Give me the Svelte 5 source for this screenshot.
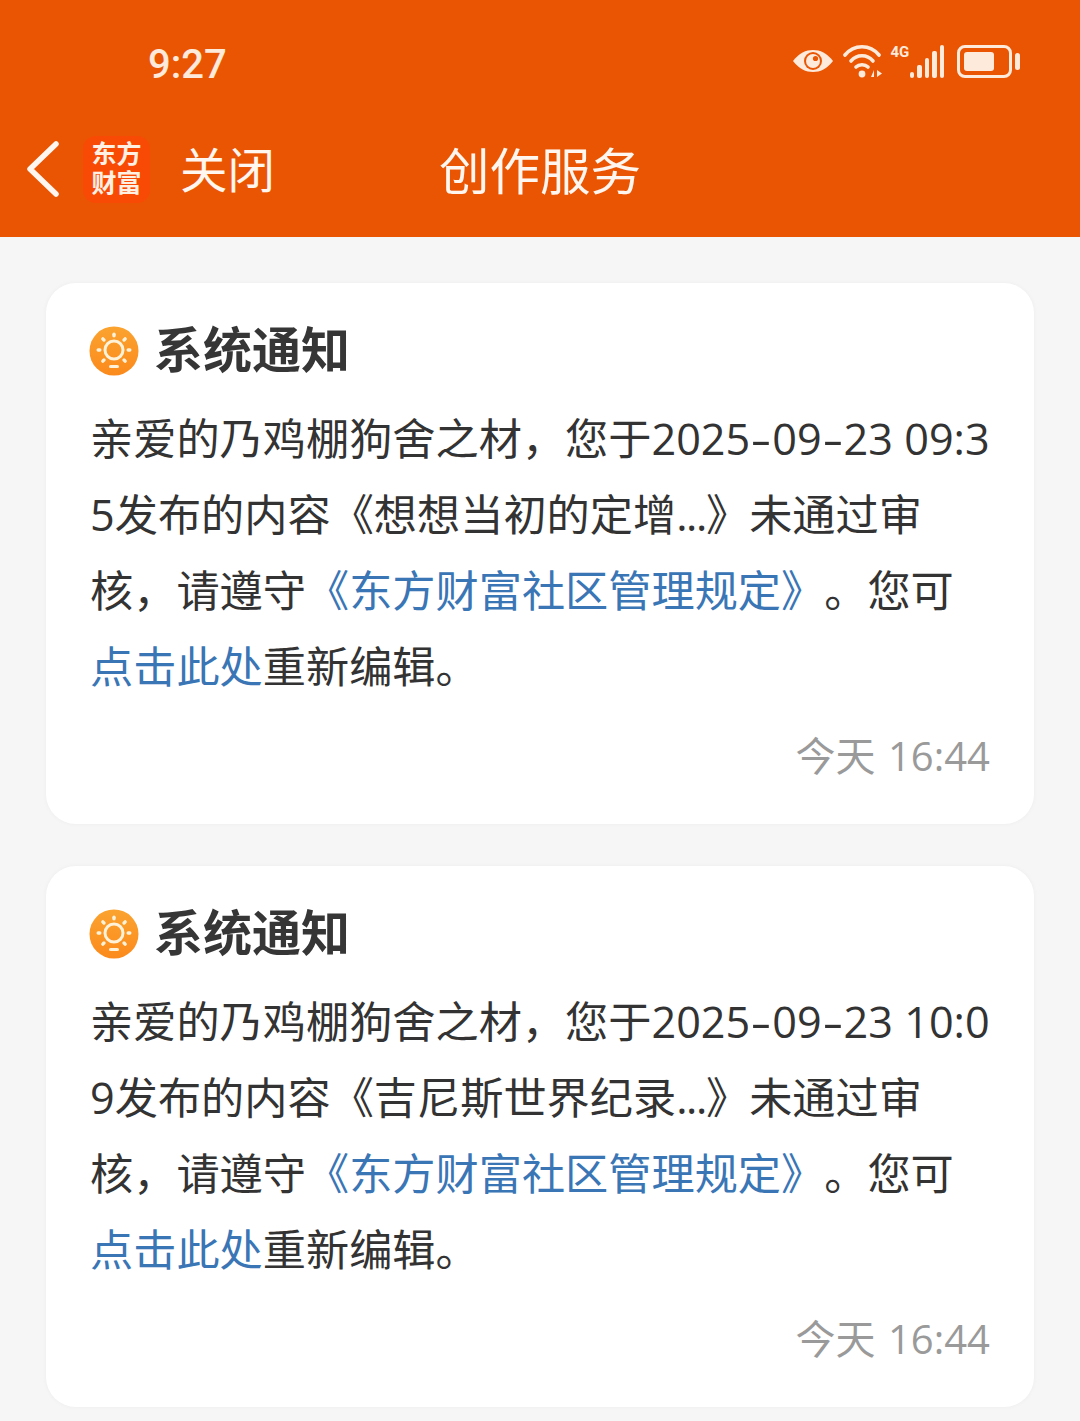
<script>
  const cards = [
    { time: '09:3', wrap: '5', book: '想想当初的定增' },
    { time: '10:0', wrap: '9', book: '吉尼斯世界纪录' }
  ];
  const sunRays = [0, 45, 90, 135, 225, 270, 315];
</script>

<div class="page">
  <header class="header">
    <div class="status">
      <span class="clock">9:27</span>
      <div class="status-icons">
        <svg class="eye" width="44" height="24" viewBox="0 0 42 24">
          <path d="M1 12C7 4 14 1 21 1s14 3 20 11c-6 8-13 11-20 11S7 20 1 12z" fill="#fdeadb"/>
          <circle cx="21" cy="12" r="9" fill="#ea5504"/>
          <circle cx="21" cy="12" r="7" fill="#fdeadb"/>
          <circle cx="23.5" cy="9.5" r="2.6" fill="#ea5504"/>
        </svg>
        <svg class="wifi" width="40" height="34" viewBox="0 0 40 34">
          <g fill="none" stroke="#fdeadb" stroke-width="3.6" stroke-linecap="round">
            <path d="M2 11C11 0 27 0 36 11"/>
            <path d="M8 17C14 10 24 10 30 17"/>
            <path d="M13 23C16 20 22 20 25 23"/>
          </g>
          <circle cx="19" cy="30" r="3.4" fill="#fdeadb"/>
          <path d="M28 33l3-7v7zM34 26l5 3.5-5 3.5z" fill="#fdeadb"/>
        </svg>
        <div class="cell">
          <span class="fourg">4G</span>
          <div class="bars">
            <i style="height: 6px"></i>
            <i style="height: 13px"></i>
            <i style="height: 20px"></i>
            <i style="height: 27px"></i>
            <i style="height: 33px"></i>
          </div>
        </div>
        <div class="battery">
          <div class="shell"><div class="level"></div></div>
          <div class="cap"></div>
        </div>
      </div>
    </div>
    <div class="nav">
      <svg class="back" width="36" height="58" viewBox="0 0 36 58">
        <path d="M31 4L5 29l26 25" fill="none" stroke="#fff6ef" stroke-width="5.5" stroke-linecap="round" stroke-linejoin="round"/>
      </svg>
      <div class="logo"><span>东方</span><span>财富</span></div>
      <span class="close">关闭</span>
      <h1 class="title">创作服务</h1>
    </div>
  </header>

  <main class="list">
    {#each cards as card}
      <article class="card">
        <div class="card-title">
          <svg class="sun" width="50" height="50" viewBox="0 0 50 50">
            <defs>
              <linearGradient id="sunfill" x1="0" y1="0" x2="0" y2="1">
                <stop offset="0" stop-color="#fba32f"/>
                <stop offset="1" stop-color="#fb8a1c"/>
              </linearGradient>
            </defs>
            <circle cx="25" cy="25" r="24.5" fill="url(#sunfill)"/>
            <circle cx="25" cy="24" r="9" fill="none" stroke="#fff2d8" stroke-width="3"/>
            {#each sunRays as a}
              <rect x="23.3" y="6.5" width="3.4" height="5" rx="1.7" fill="#fff2d8" transform="rotate({a} 25 24)"/>
            {/each}
            <rect x="20" y="39" width="10" height="3" rx="1.5" fill="#fff2d8"/>
          </svg>
          <h2>系统通知</h2>
        </div>
        <div class="body">
          <div class="line">亲爱的乃鸡棚狗舍之材，您于2025<span class="dash">-</span>09<span class="dash">-</span>23 {card.time}</div>
          <div class="line">{card.wrap}发布的内容《{card.book}<span class="dots">...</span>》未通过审</div>
          <div class="line">核，请遵守<span class="link">《东方财富社区管理规定》</span>。您可</div>
          <div class="line"><span class="link">点击此处</span>重新编辑。</div>
        </div>
        <div class="stamp">今天 16:44</div>
      </article>
    {/each}
  </main>
</div>

<style>
  :global(body) {
    margin: 0;
    background: #f6f6f6;
  }
  .page {
    height: 1421px;
    overflow: hidden;
    font-family: "Open Sans", "Noto Sans CJK SC", sans-serif;
    text-spacing-trim: space-all;
  }
  .header {
    background: #ea5504;
    height: 237px;
    box-sizing: border-box;
    display: flex;
    flex-direction: column;
  }
  .status {
    height: 125px;
    display: flex;
    justify-content: space-between;
    align-items: center;
    box-sizing: border-box;
    padding: 0 60px 0 148px;
  }
  .clock {
    font-size: 40px;
    font-weight: 500;
    color: #fdeadb;
    font-family: "Roboto", sans-serif;
    margin-top: 3px;
  }
  .status-icons {
    display: flex;
    align-items: center;
    margin-top: -3px;
  }
  .wifi {
    margin-left: 8px;
  }
  .cell {
    display: flex;
    align-items: flex-end;
    height: 33px;
    margin-left: 8px;
  }
  .fourg {
    font-size: 15px;
    font-weight: 700;
    font-family: "Roboto", sans-serif;
    color: #fdeadb;
    line-height: 15px;
    align-self: flex-start;
    width: 19px;
  }
  .bars {
    display: flex;
    align-items: flex-end;
    gap: 3px;
  }
  .bars i {
    display: block;
    width: 4.5px;
    border-radius: 2px;
    background: #fdeadb;
  }
  .battery {
    display: flex;
    align-items: center;
    gap: 3px;
    margin-left: 13px;
  }
  .shell {
    width: 55px;
    height: 33px;
    box-sizing: border-box;
    border: 3px solid #fdeadb;
    border-radius: 8px;
    padding: 4px;
  }
  .level {
    width: 30px;
    height: 100%;
    border-radius: 3px;
    background: #fdeadb;
  }
  .cap {
    width: 5px;
    height: 17px;
    border-radius: 3px;
    background: #fdeadb;
  }
  .nav {
    flex: 1;
    position: relative;
    display: flex;
    align-items: center;
    padding-left: 25px;
    padding-bottom: 24px;
  }
  .logo {
    width: 67px;
    height: 67px;
    box-sizing: border-box;
    padding-bottom: 4px;
    margin-left: 22px;
    border-radius: 13px;
    background: #f84a04;
    color: #fff0e4;
    font-family: "Noto Sans CJK SC", sans-serif;
    font-weight: 700;
    font-size: 25px;
    line-height: 29px;
    display: flex;
    flex-direction: column;
    align-items: center;
    justify-content: center;
  }
  .close {
    margin-left: 30px;
    margin-top: -3px;
    font-size: 47.5px;
    color: #fff6ef;
    font-family: "Noto Sans CJK SC", sans-serif;
    font-weight: 400;
  }
  .title {
    position: absolute;
    left: 0;
    right: 0;
    top: 0;
    margin: 0;
    padding-top: 9px;
    text-align: center;
    font-size: 50.5px;
    color: #fff6ef;
    line-height: 68px;
    font-family: "Noto Sans CJK SC", sans-serif;
    font-weight: 400;
  }
  .list {
    display: flex;
    flex-direction: column;
    gap: 42px;
    padding: 46px 46px 0;
  }
  .card {
    height: 541px;
    box-sizing: border-box;
    background: #fff;
    border-radius: 30px;
    box-shadow: 0 0 5px rgba(0, 0, 0, 0.04);
    padding: 43px 44px 0 43px;
  }
  .card-title {
    display: flex;
    align-items: center;
    gap: 15px;
    height: 50px;
  }
  .card-title h2 {
    margin: -8px 0 0;
    font-size: 49px;
    font-weight: 700;
    color: #363636;
    font-family: "Noto Sans CJK SC", sans-serif;
    line-height: 50px;
  }
  .body {
    margin-top: 25px;
    font-size: 43.2px;
    color: #333;
    line-height: 76px;
    font-weight: 400;
  }
  .line {
    white-space: nowrap;
    margin-left: 1px;
  }
  .dash {
    display: inline-block;
    width: 22px;
    text-align: center;
    transform: scaleX(1.5);
  }
  .dots {
    letter-spacing: -1.4px;
  }
  .link {
    color: #3a76b5;
  }
  .stamp {
    margin-top: 22px;
    text-align: right;
    font-size: 40px;
    word-spacing: 2px;
    line-height: 58px;
    color: #9a9a9a;
    font-weight: 400;
  }
</style>
